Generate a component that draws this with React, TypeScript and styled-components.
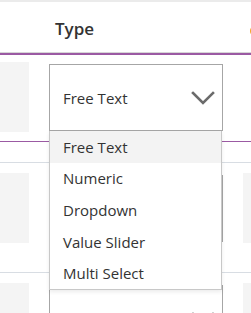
import React from "react";
import styled, { createGlobalStyle } from "styled-components";

const Global = createGlobalStyle`
  html, body { margin: 0; padding: 0; background: #fff; }
  body { font-family: "Open Sans", "Liberation Sans", sans-serif; color: #333; }
`;

const Page = styled.div`
  width: 251px;
  height: 313px;
  overflow: hidden;
  border-top: 2px solid #ebebeb;
  box-sizing: border-box;
  position: relative;
`;

const Grid = styled.div`
  display: grid;
  grid-template-columns: 29px 174px 1fr;
  column-gap: 20px;
`;

const Header = styled(Grid)`
  height: 50px;
  align-items: center;
  border-bottom: 1px solid #d6d6d6;
  box-shadow: 0 2px 0 #9b5aa3;
  margin-bottom: 2px;
`;

const HeaderLabel = styled.div`
  padding-left: 6px;
  padding-top: 3px;
  font-size: 17px;
  font-weight: 600;
  color: #333;
`;

const HeaderIcon = styled.div`
  margin-left: 7px;
  margin-top: 8px;
  width: 12px;
  height: 12px;
  border-radius: 50%;
  border: 2px solid #f5a623;
  box-sizing: border-box;
`;

const Row = styled.div<{ $first?: boolean }>`
  border-bottom: 1px solid #d8dde3;
  padding-bottom: ${(p) => (p.$first ? "20px" : "29px")};
`;

const RowMain = styled(Grid)<{ $first?: boolean }>`
  padding-top: ${(p) => (p.$first ? "7px" : "10px")};
  padding-bottom: ${(p) => (p.$first ? "9px" : "0")};
  border-bottom: ${(p) => (p.$first ? "1px solid #9b5aa3" : "none")};
`;

const GrayBox = styled.div<{ $show?: boolean }>`
  height: 70px;
  background: ${(p) => (p.$show ? "#f4f4f4" : "transparent")};
`;

const SelectCell = styled.div`
  position: relative;
  padding-top: 2px;
`;

const SelectBox = styled.div`
  height: 67px;
  box-sizing: border-box;
  border: 1px solid #a6a6a6;
  background: #fff;
  display: flex;
  align-items: center;
  justify-content: space-between;
  padding: 0 7px 0 13px;
  font-size: 15px;
  color: #333;
`;

const Menu = styled.ul`
  position: absolute;
  top: 69px;
  left: 0;
  width: 173px;
  margin: 0;
  padding: 0;
  list-style: none;
  background: #fff;
  border: 1px solid #c8c8c8;
  border-top: none;
  box-sizing: border-box;
  box-shadow: 0 2px 4px rgba(0, 0, 0, 0.08);
  z-index: 5;
`;

const MenuItem = styled.li<{ $active?: boolean }>`
  height: 31.6px;
  display: flex;
  align-items: center;
  padding-left: 13px;
  font-size: 15px;
  color: #333;
  background: ${(p) => (p.$active ? "#f3f3f3" : "#fff")};
`;

const Chevron = () => (
  <svg width="24" height="14" viewBox="0 0 24 14" aria-hidden="true">
    <polyline
      points="2,2 12,12 22,2"
      fill="none"
      stroke="#6b6b6b"
      strokeWidth="2.6"
      strokeLinecap="square"
    />
  </svg>
);

const options = ["Free Text", "Numeric", "Dropdown", "Value Slider", "Multi Select"];

const Select = ({ value, open }: { value: string; open?: boolean }) => (
  <SelectCell>
    <SelectBox>
      <span>{value}</span>
      <Chevron />
    </SelectBox>
    {open && (
      <Menu>
        {options.map((o, i) => (
          <MenuItem key={o} $active={i === 0}>
            {o}
          </MenuItem>
        ))}
      </Menu>
    )}
  </SelectCell>
);

export default function App() {
  return (
    <>
      <Global />
      <Page>
        <Header>
          <div />
          <HeaderLabel>Type</HeaderLabel>
          <HeaderIcon />
        </Header>
        <Row $first>
          <RowMain $first>
            <GrayBox $show />
            <Select value="Free Text" open />
            <GrayBox />
          </RowMain>
        </Row>
        <Row>
          <RowMain>
            <GrayBox $show />
            <Select value="Numeric" />
            <GrayBox $show />
          </RowMain>
        </Row>
        <Row>
          <RowMain>
            <GrayBox $show />
            <Select value="Multi Select" />
            <GrayBox $show />
          </RowMain>
        </Row>
      </Page>
    </>
  );
}
